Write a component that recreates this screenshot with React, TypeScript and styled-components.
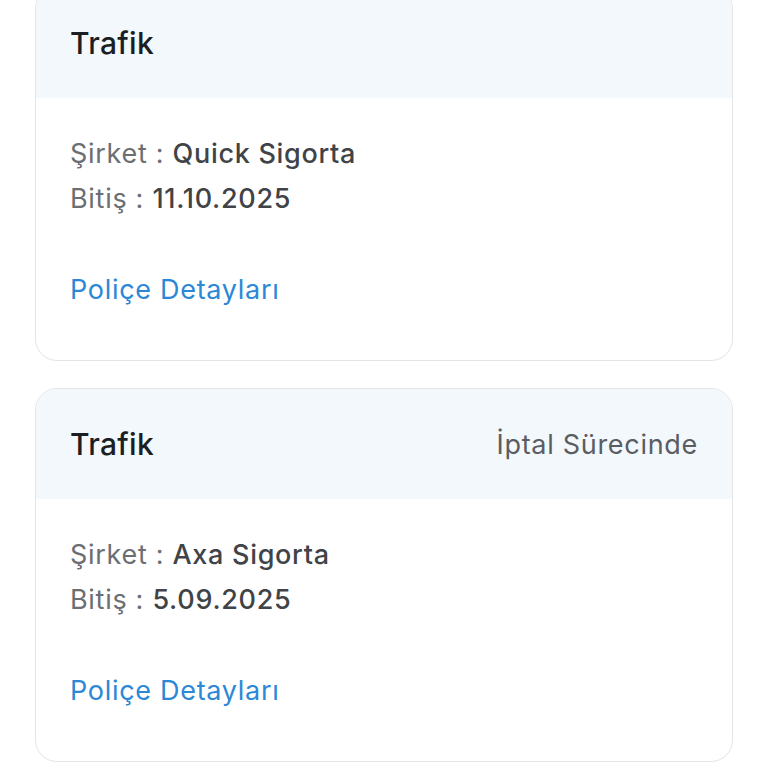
import React from "react";
import styled, { createGlobalStyle } from "styled-components";

const GlobalStyle = createGlobalStyle`
  body {
    margin: 0;
    background: #ffffff;
    font-family: Inter, "Noto Sans", sans-serif;
  }
`;

const Page = styled.div`
  display: flex;
  flex-direction: column;
  gap: 27px;
  padding: 0 35px;
  margin-top: -13px;
`;

const Card = styled.div`
  border: 1.5px solid #e2e4e6;
  border-radius: 22px;
  overflow: hidden;
  background: #ffffff;
`;

const Header = styled.div`
  height: 110px;
  box-sizing: border-box;
  display: flex;
  align-items: center;
  justify-content: space-between;
  padding: 0 34px;
  background: #f3f8fc;
`;

const Title = styled.h2`
  margin: 0;
  font-size: 30px;
  font-weight: 500;
  letter-spacing: 0.3px;
  color: #1b1e22;
`;

const Status = styled.span`
  font-size: 27px;
  letter-spacing: 0.7px;
  color: #5a5d62;
`;

const Body = styled.div`
  padding: 33px 34px 50px;
`;

const Row = styled.div`
  font-size: 27px;
  line-height: 45px;
  letter-spacing: 0.7px;
  color: #6b6e72;
`;

const Value = styled.span`
  font-weight: 500;
  color: #404347;
`;

const DetailLink = styled.a`
  display: block;
  margin-top: 49px;
  font-size: 27px;
  line-height: 40px;
  letter-spacing: 0.7px;
  color: #2c88d6;
  text-decoration: none;
  cursor: pointer;
`;

type Policy = { title: string; company: string; end: string; status?: string };

const policies: Policy[] = [
  { title: "Trafik", company: "Quick Sigorta", end: "11.10.2025" },
  { title: "Trafik", company: "Axa Sigorta", end: "5.09.2025", status: "İptal Sürecinde" },
];

function PolicyCard({ policy }: { policy: Policy }) {
  return (
    <Card>
      <Header>
        <Title>{policy.title}</Title>
        {policy.status && <Status>{policy.status}</Status>}
      </Header>
      <Body>
        <Row>
          Şirket : <Value>{policy.company}</Value>
        </Row>
        <Row>
          Bitiş : <Value>{policy.end}</Value>
        </Row>
        <DetailLink>Poliçe Detayları</DetailLink>
      </Body>
    </Card>
  );
}

export default function App() {
  return (
    <>
      <GlobalStyle />
      <Page>
        {policies.map((p, i) => (
          <PolicyCard key={i} policy={p} />
        ))}
      </Page>
    </>
  );
}
